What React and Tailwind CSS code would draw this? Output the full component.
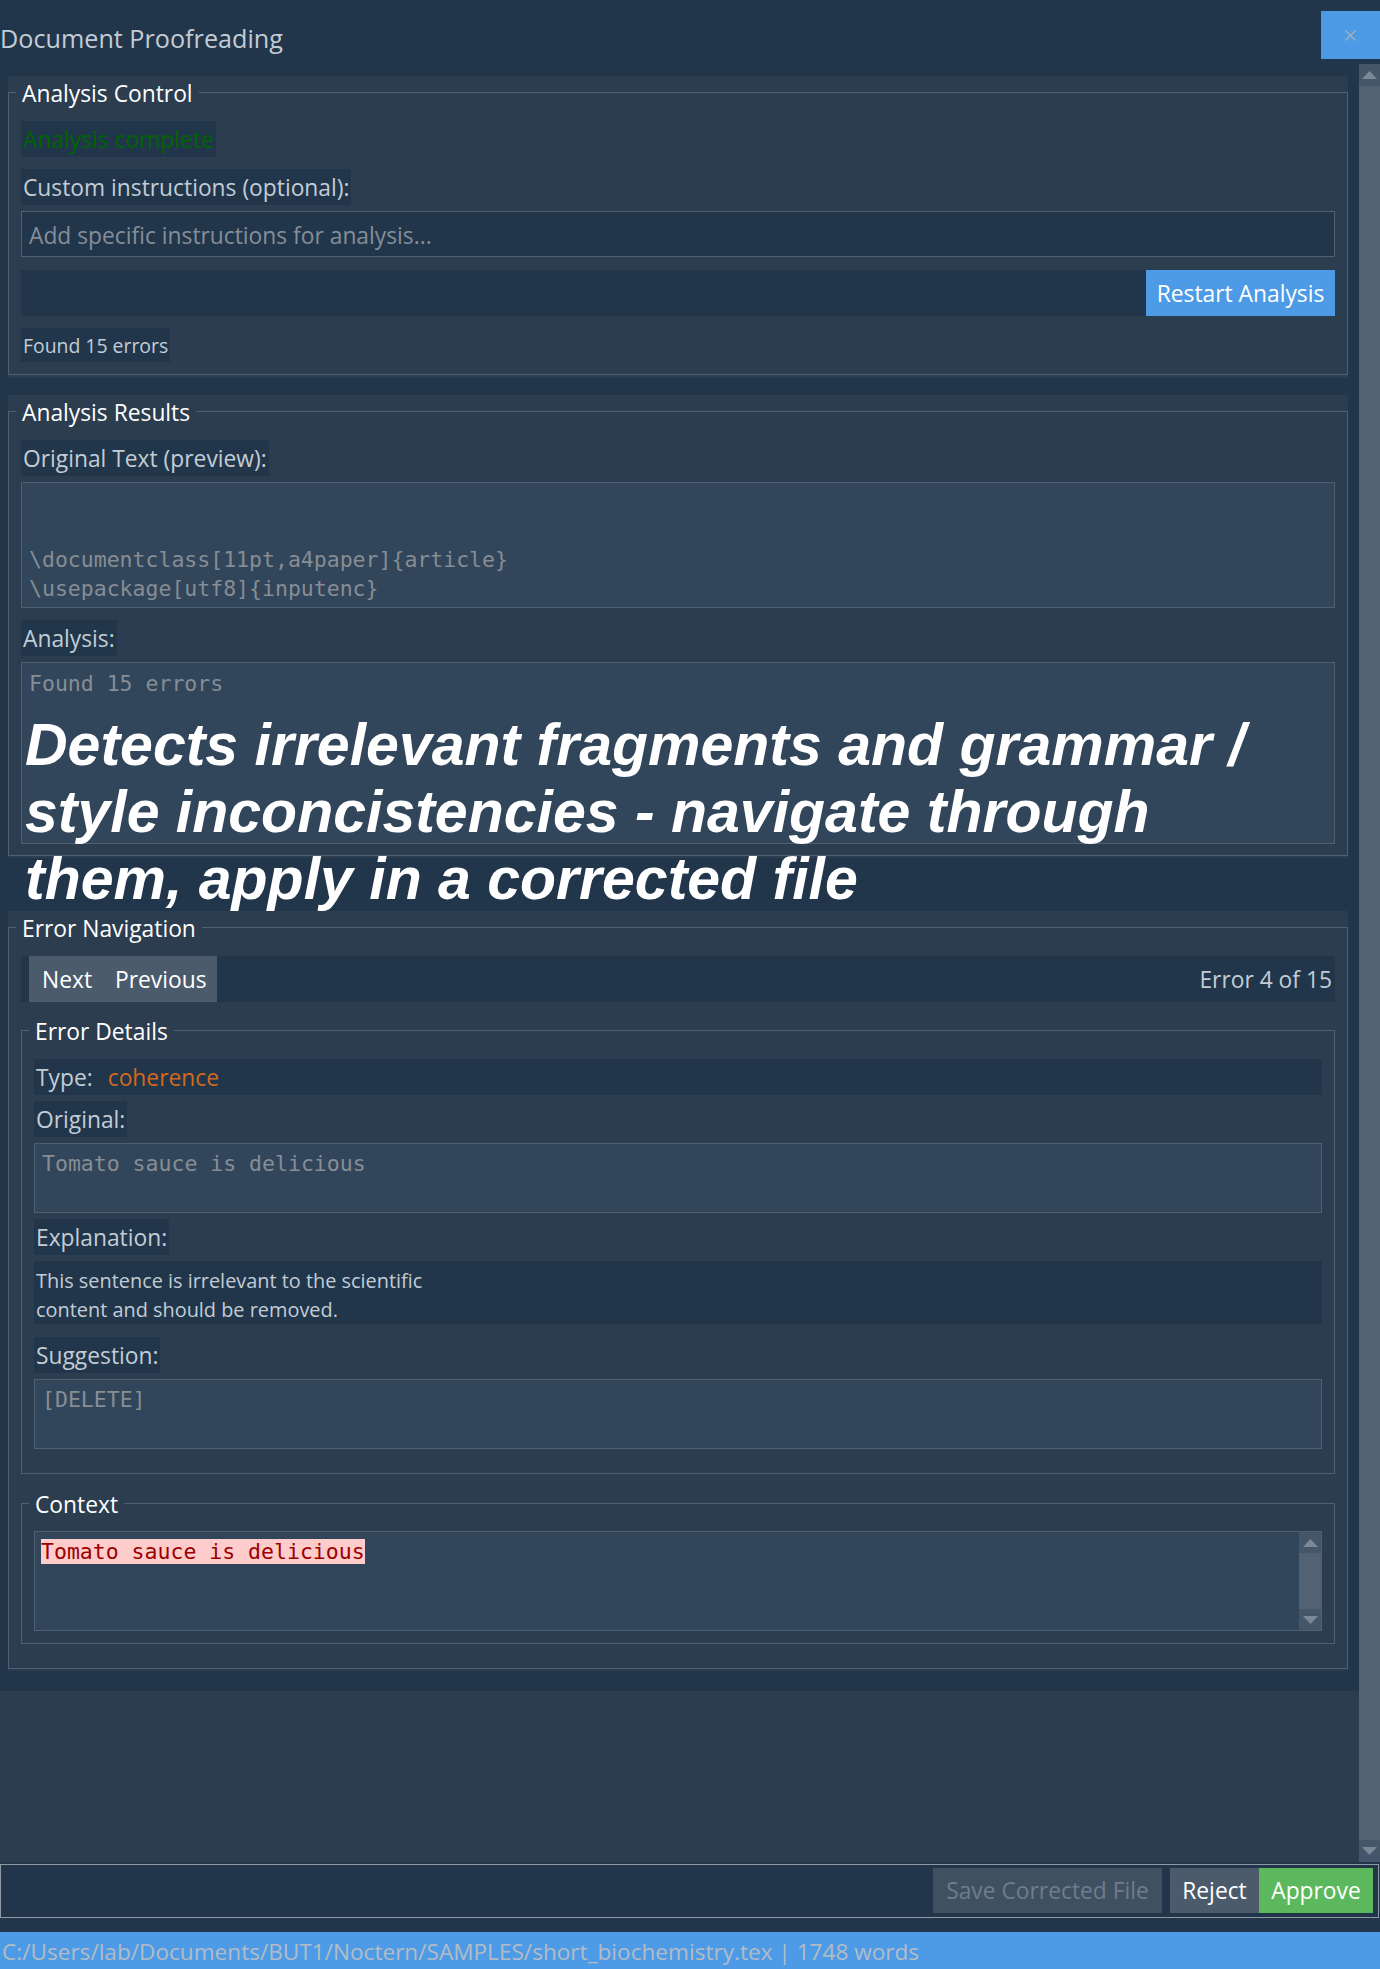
import React from "react";

const mono = "font-['DejaVu_Sans_Mono','Liberation_Mono',monospace]";

function Arrow({ up }) {
  return (
    <svg width="15" height="8" viewBox="0 0 15 8">
      <polygon points={up ? "7.5,0 15,8 0,8" : "0,0 15,0 7.5,8"} fill="#7b8996" />
    </svg>
  );
}

function Scrollbar({ className, btn }) {
  return (
    <div className={`flex flex-col bg-[#526272] ${className}`}>
      <div className={`flex items-center justify-center bg-[#45566a] ${btn}`}><Arrow up /></div>
      <div className="flex-1" />
      <div className={`flex items-center justify-center bg-[#45566a] ${btn}`}><Arrow /></div>
    </div>
  );
}

function Group({ title, className = "", pb = "pb-[12px]", pt = "pt-[13px]", children }) {
  return (
    <fieldset className={`min-w-0 border border-[#4e6072] px-[12px] ${pt} ${pb} ${className}`}>
      <legend className="-ml-[5px] px-[6px] pt-[3px] text-[22.8px] leading-[29px] text-white">{title}</legend>
      {children}
    </fieldset>
  );
}

function Label({ children, className = "" }) {
  return (
    <div className={`self-start bg-[#21364b] px-[2px] pt-[2px] text-[22.8px] leading-[34px] text-[#c3ccd5] ${className}`}>
      {children}
    </div>
  );
}

function TextBox({ children, className = "" }) {
  return (
    <div className={`w-full border border-[#4e6072] bg-[#31465b] pl-[7px] ${mono} whitespace-pre text-[21.5px] leading-[29px] text-[#878d93] ${className}`}>
      {children}
    </div>
  );
}

export default function App() {
  return (
    <div className="relative flex h-[1969px] w-[1380px] flex-col overflow-hidden bg-[#21364b] font-['Open_Sans',sans-serif]">
      <header className="flex h-[64px] shrink-0 items-start justify-between">
        <h1 className="mt-[21px] text-[25.2px] leading-[34px] text-[#c3ccd5]">Document Proofreading</h1>
        <button className="mt-[11px] flex h-[48px] w-[59px] items-center justify-center bg-[#4d9be6]">
          <svg width="11" height="11" viewBox="0 0 11 11">
            <path d="M0.5 0.5L10.5 10.5M10.5 0.5L0.5 10.5" stroke="#a7b0b9" strokeWidth="1.4" />
          </svg>
        </button>
      </header>

      <div className="flex h-[1798px] shrink-0">
        <div className="flex w-[1359px] flex-col bg-[#2b3d4f]">
          <div className="bg-[#21364b] pt-[12px] pb-[20px] pl-[8px] pr-[11px]">
            {/* Analysis control */}
            <div className="bg-[#2b3d4f] pb-[3px]">
              <Group title="Analysis Control">
                <div className="flex flex-col">
                  <Label className="!text-[#006400]">Analysis complete</Label>
                  <Label className="mt-[12px]">Custom instructions (optional):</Label>
                  <input
                    readOnly
                    placeholder="Add specific instructions for analysis..."
                    className="mt-[6px] h-[46px] w-full border border-[#4e6072] bg-[#21364b] px-[7px] pt-[2px] text-[22.8px] text-[#c3ccd5] outline-none placeholder:text-[#858e97]"
                  />
                  <div className="mt-[13px] flex h-[46px] justify-end bg-[#21364b]">
                    <button className="w-[189px] bg-[#4d9be6] pt-[2px] text-[22.8px] text-white">Restart Analysis</button>
                  </div>
                  <Label className="mt-[12px] !text-[19.4px] !leading-[32px]">Found 15 errors</Label>
                </div>
              </Group>
            </div>

            {/* Analysis results */}
            <div className="mt-[17px] bg-[#2b3d4f] pb-[2px]">
              <Group title="Analysis Results" pb="pb-[11px]">
                <div className="flex flex-col">
                  <Label>Original Text (preview):</Label>
                  <TextBox className="mt-[6px] h-[126px] pt-[4px]">
                    {"\n\n\\documentclass[11pt,a4paper]{article}\n\\usepackage[utf8]{inputenc}"}
                  </TextBox>
                  <Label className="mt-[12px]">Analysis:</Label>
                  <TextBox className="mt-[6px] h-[182px] pt-[6px]">Found 15 errors</TextBox>
                </div>
              </Group>
            </div>

            {/* Error navigation */}
            <div className="mt-[53px] bg-[#2b3d4f] pb-[2px]">
              <Group title="Error Navigation" pb="pb-[24px]">
                <div className="flex h-[46px] items-stretch justify-between bg-[#21364b] pl-[8px] pr-[3px]">
                  <div className="flex bg-[#4b5b6c] pt-[2px] text-[22.8px] text-white">
                    <button className="w-[74px] pl-[13px] text-left">Next</button>
                    <button className="w-[114px] pl-[12px] text-left">Previous</button>
                  </div>
                  <span className="self-center pt-[2px] text-[22.8px] text-[#c3ccd5]">Error 4 of 15</span>
                </div>

                <Group title="Error Details" className="mt-[12px]" pb="pb-[24px]">
                  <div className="flex flex-col">
                    <div className="flex h-[36px] items-center bg-[#21364b] px-[2px] pt-[2px] text-[22.8px]">
                      <span className="text-[#c3ccd5]">Type:</span>
                      <span className="ml-[15px] text-[#d2691e]">coherence</span>
                    </div>
                    <Label className="mt-[6px]">Original:</Label>
                    <TextBox className="mt-[6px] h-[70px] pt-[5px]">Tomato sauce is delicious</TextBox>
                    <Label className="mt-[6px]">Explanation:</Label>
                    <div className="mt-[6px] h-[63px] bg-[#21364b] px-[2px] pt-[5px] text-[19.9px] leading-[29px] text-[#c3ccd5]">
                      This sentence is irrelevant to the scientific<br />content and should be removed.
                    </div>
                    <Label className="mt-[13px]">Suggestion:</Label>
                    <TextBox className="mt-[6px] h-[70px] pt-[5px]">[DELETE]</TextBox>
                  </div>
                </Group>

                <Group title="Context" className="mt-[13px]" pt="pt-[12px]">
                  <div className="flex h-[100px] border border-[#4e6072] bg-[#31465b]">
                    <div className={`flex-1 pl-[6px] pt-[6px] ${mono} text-[21.5px] leading-[28px]`}>
                      <span className="bg-[#ffcccc] text-[#9b0000]">Tomato sauce is delicious</span>
                    </div>
                    <Scrollbar className="w-[22px]" btn="h-[21px]" />
                  </div>
                </Group>
              </Group>
            </div>
          </div>
        </div>
        <Scrollbar className="w-[21px]" btn="h-[22px]" />
      </div>

      <div className="mt-[2px] flex h-[54px] w-[1379px] shrink-0 justify-end border border-[#8e99a4] pt-[3px] pr-[5px]">
        <button disabled className="h-[45px] w-[229px] bg-[#3f5061] pt-[2px] text-[22.8px] text-[#6e7d8b]">Save Corrected File</button>
        <button className="ml-[8px] h-[45px] w-[89px] bg-[#4b5b6c] pt-[2px] text-[22.8px] text-white">Reject</button>
        <button className="h-[45px] w-[114px] bg-[#5cb85c] pt-[2px] text-[22.8px] text-white">Approve</button>
      </div>

      <div className="mt-[14px] flex h-[37px] shrink-0 items-center bg-[#4d9be6] pl-[2px] pt-[2px] text-[22.6px] text-[#b3bcc6]">
        C:/Users/lab/Documents/BUT1/Noctern/SAMPLES/short_biochemistry.tex | 1748 words
      </div>

      <p className="absolute left-[25px] top-[712px] whitespace-nowrap font-['Liberation_Sans',Arial,sans-serif] text-[59px] font-bold italic leading-[67px] text-white">
        Detects irrelevant fragments and grammar /<br />
        style inconcistencies - navigate through<br />
        them, apply in a corrected file
      </p>
    </div>
  );
}
